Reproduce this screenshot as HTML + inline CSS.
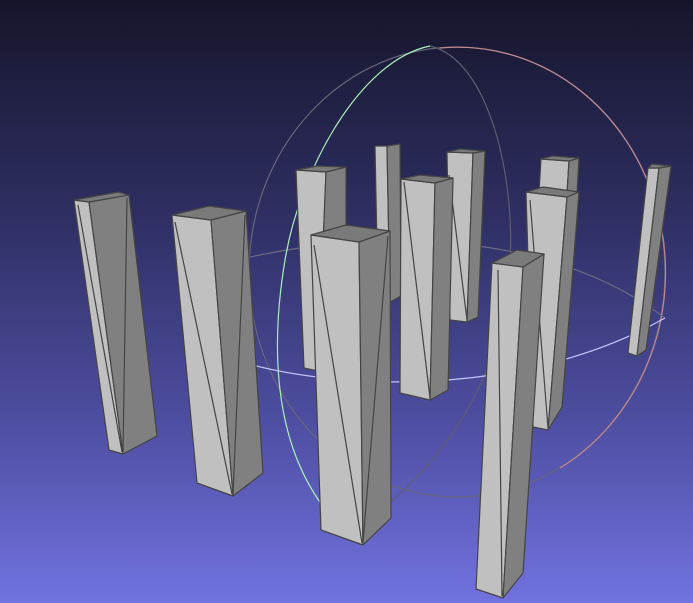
<!DOCTYPE html>
<html><head><meta charset="utf-8"><style>
html,body{margin:0;padding:0;width:693px;height:603px;overflow:hidden}
svg{display:block}
</style></head><body>
<svg width="693" height="603" viewBox="0 0 693 603" xmlns="http://www.w3.org/2000/svg">
<defs>
<linearGradient id="bg" x1="0" y1="0" x2="0" y2="1">
<stop offset="0" stop-color="#15152b"/>
<stop offset="0.35" stop-color="#2e2e62"/>
<stop offset="0.7" stop-color="#4e4ea2"/>
<stop offset="1" stop-color="#7272e0"/>
</linearGradient>
</defs>
<rect width="693" height="603" fill="url(#bg)"/>
<g fill="none" stroke-width="1.2">
<ellipse cx="457" cy="272" rx="208" ry="225" stroke="#66667a"/>
<path d="M440,48 A208,225 0 0 1 560,468" stroke="#c08890"/>
<path d="M250,257 C400,225 560,238 665,318" stroke="#6a6a80"/>
<path d="M430,46 C490,60 515,180 510,260 C505,380 440,470 360,525" stroke="#5e5e70"/>
<path d="M430,46 C360,60 300,170 285,260 C270,350 275,440 322,505" stroke="#a8f0b8"/>
<path d="M235,360 C330,390 520,400 665,318" stroke="#c4c4ff"/>
</g>
<g stroke="#444" stroke-width="1.2" stroke-linejoin="round">
<polygon points="541,159 569,161 566,210 538,210" fill="#c0c0c0"/>
<polygon points="569,161 579,158 576,210 566,210" fill="#808080"/>
<polygon points="541,159 552,156 579,158 569,161" fill="#7a7a7a"/>
<polygon points="375,146 387,146 390,302 378,298" fill="#c0c0c0"/>
<polygon points="387,146 400,144 401,296 390,302" fill="#808080"/>
<polygon points="447,152 473,153 467,322 450,320" fill="#c0c0c0"/>
<polygon points="473,153 485,151 478,317 467,322" fill="#808080"/>
<polygon points="447,152 460,149 485,151 473,153" fill="#7a7a7a"/>
<line x1="449" y1="175" x2="467" y2="320"/>
<polygon points="648,168 659,168 637,356 628,353" fill="#c0c0c0"/>
<polygon points="659,168 671,166 646,350 637,356" fill="#808080"/>
<polygon points="648,168 652,164 671,166 659,168" fill="#7a7a7a"/>
<polygon points="296,170 326,172 318,371 304,368" fill="#c0c0c0"/>
<polygon points="326,172 346,167 346,362 318,371" fill="#808080"/>
<polygon points="296,170 317,166 346,167 326,172" fill="#7a7a7a"/>
<polygon points="526,192 567,197 548,430 533,427" fill="#c0c0c0"/>
<polygon points="567,197 579,192 562,407 548,430" fill="#808080"/>
<polygon points="526,192 543,187 579,192 567,197" fill="#7a7a7a"/>
<line x1="530" y1="200" x2="548" y2="428"/>
<polygon points="401,179 435,183 430,400 400,393" fill="#c0c0c0"/>
<polygon points="435,183 453,178 448,390 430,400" fill="#808080"/>
<polygon points="401,179 420,175 453,178 435,183" fill="#7a7a7a"/>
<line x1="404" y1="182" x2="430" y2="398"/>
<polygon points="74,200 89,202 123,454 109,450" fill="#c0c0c0"/>
<polygon points="89,202 129,195 157,436 123,454" fill="#808080"/>
<polygon points="74,200 118,192 129,195 89,202" fill="#7a7a7a"/>
<line x1="78" y1="205" x2="122" y2="452"/>
<line x1="127" y1="198" x2="123" y2="452"/>
<polygon points="172,215 211,220 233,496 197,483" fill="#c0c0c0"/>
<polygon points="211,220 246,211 263,473 233,496" fill="#808080"/>
<polygon points="172,215 209,206 246,211 211,220" fill="#7a7a7a"/>
<line x1="175" y1="222" x2="232" y2="494"/>
<line x1="245" y1="215" x2="233" y2="494"/>
<polygon points="492,263 523,267 503,598 476,589" fill="#c0c0c0"/>
<polygon points="523,267 544,254 523,573 503,598" fill="#808080"/>
<polygon points="492,263 517,250 544,254 523,267" fill="#7a7a7a"/>
<line x1="498" y1="270" x2="502" y2="596"/>
<polygon points="311,235 359,242 363,545 321,530" fill="#c0c0c0"/>
<polygon points="359,242 390,231 391,518 363,545" fill="#808080"/>
<polygon points="311,235 346,225 390,231 359,242" fill="#7a7a7a"/>
<line x1="314" y1="245" x2="362" y2="543"/>
<line x1="388" y1="236" x2="363" y2="543"/>
</g>
</svg>
</body></html>
